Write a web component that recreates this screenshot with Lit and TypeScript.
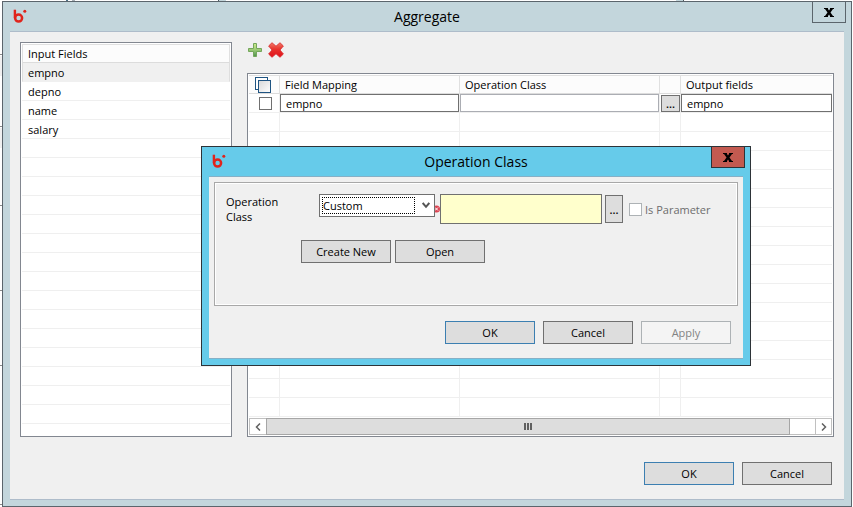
import { LitElement, html, svg, css } from "lit";
import { customElement } from "lit/decorators.js";

const logo = html`<svg class="logo" width="16" height="16" viewBox="0 0 16 16" aria-hidden="true">
  <path d="M1.9 .7V9.2" stroke="#e0241c" stroke-width="2.4" fill="none" />
  <circle cx="5.6" cy="9.1" r="3.5" stroke="#e0241c" stroke-width="2.5" fill="none" />
  <circle cx="11.8" cy="2.3" r="1.5" fill="#e0241c" />
</svg>`;

const cross = html`<svg width="10" height="9" viewBox="0 0 10 9" aria-hidden="true">
  <path d="M0 0H4V1L5 2.4L6 1V0H10V1H9L6.5 4.5L9 8H10V9H6V8L5 6.6L4 8V9H0V8H1L3.5 4.5L1 1H0Z" fill="#000" />
</svg>`;

const plus = html`<svg width="16" height="16" viewBox="0 0 16 16" aria-hidden="true">
  <defs>
    <linearGradient id="leaf" x1="0" y1="0" x2="0" y2="1">
      <stop offset="0" stop-color="#cdea8c" />
      <stop offset=".5" stop-color="#9aca74" />
      <stop offset="1" stop-color="#4c9150" />
    </linearGradient>
  </defs>
  <path d="M6.5 1.5H9.5V6.5H14.5V9.5H9.5V14.5H6.5V9.5H1.5V6.5H6.5Z" fill="url(#leaf)" stroke="#74a65a" />
</svg>`;

const remove = html`<svg width="16" height="16" viewBox="0 0 16 16" aria-hidden="true">
  <defs>
    <linearGradient id="ruby" x1="0" y1="0" x2="0" y2="1">
      <stop offset="0" stop-color="#f07a68" />
      <stop offset=".45" stop-color="#e8322c" />
      <stop offset="1" stop-color="#e0101a" />
    </linearGradient>
  </defs>
  <path d="M4 .7L8 4.2L12 .7L15.4 4L12 8L15.4 12L12 15.3L8 11.8L4 15.3L.6 12L4 8L.6 4Z"
    fill="url(#ruby)" stroke="#d8262a" stroke-width=".8" stroke-linejoin="round" />
</svg>`;

const stack = html`<svg class="stack" width="16" height="16" viewBox="0 0 16 16" role="img" aria-label="Select rows">
  <defs>
    <linearGradient id="sheet" x1="0" y1="0" x2="1" y2="1">
      <stop offset="0" stop-color="#d8d8d8" />
      <stop offset="1" stop-color="#fff" />
    </linearGradient>
  </defs>
  <rect x=".5" y=".5" width="12" height="12" fill="#fff" stroke="#1f5482" />
  <rect x="3.5" y="3.5" width="12" height="12" fill="url(#sheet)" stroke="#1f5482" />
</svg>`;

const arrow = (d: string) => html`<svg width="6" height="8" viewBox="0 0 6 8" aria-hidden="true">
  ${svg`<path d=${d} fill="none" stroke="#606060" stroke-width="1.5" />`}
</svg>`;

const errorMark = html`<svg class="error" width="5" height="8" viewBox="0 0 5 8" role="img" aria-label="Value required">
  <circle cx="1.5" cy="4" r="3.5" fill="#dc4654" />
  <path d="M0 2.5L3 5.5M3 2.5L0 5.5" stroke="#fff" />
</svg>`;

const frame = css`
  * {
    box-sizing: border-box;
  }
  .frame {
    display: flex;
    flex-direction: column;
    border: 1px solid var(--edge);
    background: var(--frame);
    padding: 0 7px 6px;
  }
  .titlebar {
    display: grid;
    grid-template-columns: 1fr auto 1fr;
    height: 29px;
    margin-right: -2px;
    margin-left: -2px;
  }
  .logo {
    margin: 7px 0 0 5px;
  }
  .title {
    margin: 0;
    font-size: 14px;
    font-weight: 400;
    line-height: 29px;
  }
  .close {
    justify-self: end;
    display: grid;
    place-items: center;
    width: 34px;
    height: 22px;
    margin-top: -1px;
    padding: 0;
    border: 1px solid var(--edge);
    background: var(--close);
  }
  .client {
    flex: 1;
    display: flex;
    flex-direction: column;
    background: #f0f0f0;
    border-top: 1px solid var(--line);
    border-bottom: 1px solid var(--line);
  }
  .footer {
    display: flex;
    justify-content: flex-end;
    gap: 8px;
    padding: 0 12px 14px;
  }
  button {
    font: inherit;
    color: #000;
  }
  .push {
    width: 90px;
    height: 23px;
    padding: 0;
    border: 1px solid #707070;
    background: #ddd;
  }
  .push.default {
    border-color: #3c7fb1;
  }
  .push:disabled {
    border-color: #adb2b5;
    background: #f4f4f4;
    color: #838383;
  }
  .dots {
    padding: 0;
    border: 1px solid #707070;
    background: #ddd;
    font-weight: 600;
  }
  input[type="checkbox"] {
    appearance: none;
    flex: none;
    display: block;
    width: 13px;
    height: 13px;
    margin: 0;
    border: 1px solid #707070;
    background: #fff;
  }
  input[type="checkbox"]:disabled {
    border-color: #adb2b5;
  }
`;

@customElement("operation-dialog")
export class OperationDialog extends LitElement {
  static styles = [
    frame,
    css`
      :host {
        display: block;
      }
      .frame {
        --edge: #2d3338;
        --frame: #66cbea;
        --line: #86b0c6;
        --close: #c35a50;
      }
      .group {
        margin: 5px 5px 15px;
        padding: 11px 11px 42px;
        border: 1px solid #a8a8a8;
        box-shadow: inset 0 0 0 1px #fff;
      }
      .fields {
        display: flex;
        align-items: center;
      }
      .caption {
        width: 93px;
        padding-right: 30px;
        line-height: 15px;
      }
      .combo {
        align-self: flex-start;
        display: flex;
        align-items: center;
        width: 116px;
        height: 23px;
        padding: 2px;
        border: 1px solid #707070;
        background: #fff;
      }
      select {
        appearance: none;
        width: 93px;
        height: 17px;
        padding: 0;
        border: 1px dotted #000;
        background: #fff;
        color: #000;
        font: inherit;
        line-height: 15px;
      }
      .chevron {
        margin-left: 7px;
      }
      .value {
        flex: 1;
        min-width: 0;
        height: 30px;
        margin-right: 3px;
        border: 1px solid #707070;
        background: #ffc;
        font: inherit;
      }
      .browse {
        width: 18px;
        height: 28px;
        margin-right: 6px;
      }
      .param {
        display: flex;
        align-items: center;
        gap: 3px;
        width: 97px;
        color: #6d6d6d;
      }
      .actions {
        display: flex;
        gap: 4px;
        margin-top: 16px;
        padding-left: 75px;
      }
    `,
  ];

  render() {
    return html`<section class="frame" role="dialog" aria-labelledby="heading">
      <header class="titlebar">
        ${logo}
        <h2 class="title" id="heading">Operation Class</h2>
        <button class="close" aria-label="Close">${cross}</button>
      </header>
      <div class="client">
        <div class="group">
          <div class="fields">
            <label class="caption" for="kind">Operation Class</label>
            <div class="combo">
              <select id="kind">
                <option>Custom</option>
              </select>
              <svg class="chevron" width="8" height="7" viewBox="0 0 8 7" aria-hidden="true">
                <path d="M.7 1L4 4.8L7.3 1" fill="none" stroke="#555" stroke-width="2" />
              </svg>
            </div>
            ${errorMark}
            <input class="value" type="text" aria-label="Class name" />
            <button class="dots browse" aria-label="Browse">...</button>
            <label class="param"><input type="checkbox" disabled />Is Parameter</label>
          </div>
          <div class="actions">
            <button class="push">Create New</button>
            <button class="push">Open</button>
          </div>
        </div>
        <footer class="footer">
          <button class="push default">OK</button>
          <button class="push">Cancel</button>
          <button class="push" disabled>Apply</button>
        </footer>
      </div>
    </section>`;
  }
}

@customElement("app-root")
export class AppRoot extends LitElement {
  static styles = [
    frame,
    css`
      :host {
        box-sizing: border-box;
        display: flex;
        flex-direction: column;
        position: relative;
        min-height: 100vh;
        padding: 1px 1px 0 2px;
        font: 11px "Open Sans", "Noto Sans", sans-serif;
        color: #000;
        background:
          linear-gradient(#888, #888) 0 54px / 2px 1px no-repeat,
          linear-gradient(#f0f0f0, #f0f0f0) 0 56px / 2px 20px no-repeat,
          linear-gradient(#888, #888) 0 126px / 2px 1px no-repeat,
          linear-gradient(#f0f0f0, #f0f0f0) 0 128px / 2px 20px no-repeat,
          linear-gradient(#888, #888) 0 205px / 2px 1px no-repeat,
          linear-gradient(#888, #888) 0 290px / 2px 1px no-repeat,
          linear-gradient(#888, #888) 0 365px / 2px 1px no-repeat,
          linear-gradient(#888, #888) 0 504px / 2px 1px no-repeat,
          linear-gradient(#4d7187, #4d7187) 66px 0 / 2px 1px no-repeat,
          linear-gradient(#a8b0b8, #a8b0b8) 72px 0 / 3px 1px no-repeat,
          linear-gradient(#4f5a62, #4f5a62) 218px 0 / 1px 1px no-repeat,
          linear-gradient(#c3d6dc, #c3d6dc) 219px 0 / 7px 1px no-repeat,
          linear-gradient(#c3d6dc, #c3d6dc) 676px 0 / 7px 1px no-repeat,
          linear-gradient(#4f5a62, #4f5a62) 683px 0 / 1px 1px no-repeat,
          #fff;
      }
      .main {
        --edge: #5b656c;
        --frame: #c3d6dc;
        --line: #aebcca;
        --close: #c3d6dc;
        flex: 1;
      }
      .panels {
        flex: 1;
        display: grid;
        grid-template-columns: 212px 1fr;
        gap: 15px;
        padding: 10px 10px 25px;
      }
      .sheet {
        border: 1px solid #828790;
        background: #fff;
        padding: 1px;
      }
      .right {
        display: flex;
        flex-direction: column;
        gap: 15px;
        min-width: 0;
      }
      .tools {
        display: flex;
        gap: 5px;
        height: 16px;
      }
      .tool {
        display: block;
        width: 16px;
        height: 16px;
        padding: 0;
        border: 0;
        background: none;
      }
      .mapping {
        flex: 1;
      }
      table {
        width: 100%;
        table-layout: fixed;
        border-collapse: separate;
        border-spacing: 0;
      }
      th,
      td {
        height: 19px;
        padding: 0 0 0 6px;
        border-bottom: 1px solid #efefef;
        text-align: left;
        font-weight: 400;
        line-height: 16px;
      }
      th {
        border-top: 1px solid #e0e0e0;
        border-right: 1px solid #e0e0e0;
        border-bottom-color: #dcdcdc;
        background: #fcfcfc;
      }
      .list th {
        border-left: 1px solid #e0e0e0;
        padding-left: 5px;
      }
      .list td {
        padding-top: 2px;
      }
      .list .picked {
        border: 1px solid #dedede;
        border-top: 0;
        border-bottom-color: #f0f0f0;
        background: #f0f0f0;
        padding-left: 5px;
      }
      .grid th {
        padding-left: 5px;
      }
      .grid td {
        padding: 0;
        border-right: 1px solid #efefef;
      }
      .grid td:last-child,
      .grid th:last-child {
        border-right: 0;
      }
      .c-check {
        width: 31px;
      }
      .c-map {
        width: 180px;
      }
      .c-op {
        width: 200px;
      }
      .c-more {
        width: 21px;
      }
      .stack {
        display: block;
        margin-left: 1px;
      }
      .grid input[type="checkbox"] {
        margin-left: 10px;
      }
      .cell {
        display: block;
        width: 100%;
        height: 18px;
        padding: 0 5px;
        border: 1px solid #707070;
        background: #fff;
        color: #000;
        font: inherit;
      }
      .cell.pale {
        border-color: #abadb3;
      }
      .more {
        display: block;
        width: 19px;
        height: 17px;
        margin: 1px 0 0 1px;
        line-height: 15px;
      }
      .scroll {
        display: flex;
        height: 17px;
        margin-top: 1px;
        border: 1px solid #c0c0c0;
        background: #fff;
      }
      .step {
        display: grid;
        place-items: center;
        width: 16px;
        padding: 0;
        border: 0;
        background: #fff;
      }
      .step.next {
        border-left: 1px solid #c0c0c0;
      }
      .thumb {
        flex: 1;
        display: flex;
        justify-content: center;
        align-items: center;
        gap: 1px;
        margin: -1px 25px -1px 0;
        border: 1px solid #a6a6a6;
        background: #ddd;
      }
      .thumb i {
        width: 2px;
        height: 7px;
        background: #606060;
      }
      operation-dialog {
        position: absolute;
        left: 201px;
        top: 146px;
        width: 550px;
      }
    `,
  ];

  private names = ["empno", "depno", "name", "salary"];

  render() {
    const rows = Array.from({ length: 19 }, (_, i) => this.names[i] ?? "");
    return html`<main class="frame main">
        <header class="titlebar">
          ${logo}
          <h1 class="title">Aggregate</h1>
          <button class="close" aria-label="Close">${cross}</button>
        </header>
        <div class="client">
          <div class="panels">
            <div class="sheet">
              <table class="list">
                <thead>
                  <tr><th>Input Fields</th></tr>
                </thead>
                <tbody>
                  ${rows.map((name, i) => html`<tr><td class=${i === 0 ? "picked" : ""}>${name}</td></tr>`)}
                </tbody>
              </table>
            </div>
            <div class="right">
              <div class="tools">
                <button class="tool" aria-label="Add">${plus}</button>
                <button class="tool" aria-label="Remove">${remove}</button>
              </div>
              <div class="sheet mapping">
                <table class="grid">
                  <colgroup>
                    <col class="c-check" />
                    <col class="c-map" />
                    <col class="c-op" />
                    <col class="c-more" />
                    <col />
                  </colgroup>
                  <thead>
                    <tr>
                      <th>${stack}</th>
                      <th>Field Mapping</th>
                      <th>Operation Class</th>
                      <th></th>
                      <th>Output fields</th>
                    </tr>
                  </thead>
                  <tbody>
                    <tr>
                      <td><input type="checkbox" aria-label="Select empno" /></td>
                      <td><input class="cell" aria-label="Field mapping" .value=${"empno"} /></td>
                      <td><input class="cell pale" aria-label="Operation class" /></td>
                      <td><button class="dots more" aria-label="Browse">...</button></td>
                      <td><input class="cell" aria-label="Output field" .value=${"empno"} /></td>
                    </tr>
                    ${rows.slice(3).map(() => html`<tr><td></td><td></td><td></td><td></td><td></td></tr>`)}
                  </tbody>
                </table>
                <div class="scroll">
                  <button class="step" aria-label="Scroll left">${arrow("M5 .5L1.5 4L5 7.5")}</button>
                  <div class="thumb"><i></i><i></i><i></i></div>
                  <button class="step next" aria-label="Scroll right">${arrow("M1 .5L4.5 4L1 7.5")}</button>
                </div>
              </div>
            </div>
          </div>
          <footer class="footer">
            <button class="push default">OK</button>
            <button class="push">Cancel</button>
          </footer>
        </div>
      </main>
      <operation-dialog></operation-dialog>`;
  }
}
